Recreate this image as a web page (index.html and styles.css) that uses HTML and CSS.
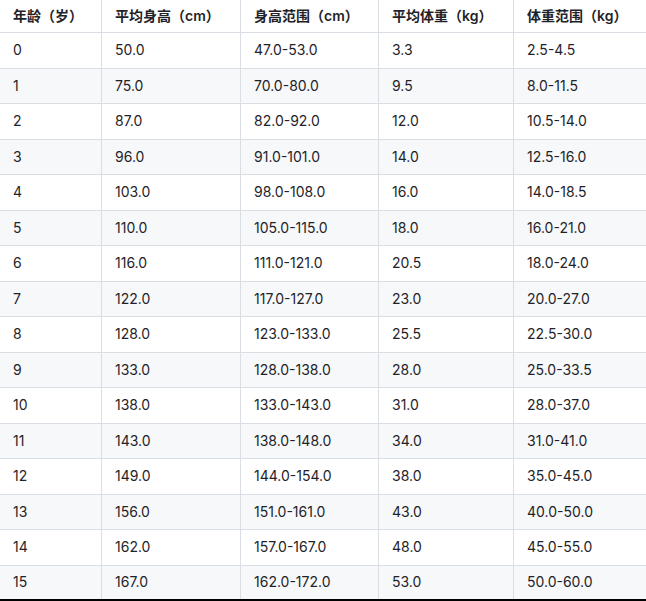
FILE: index.html
```html
<!DOCTYPE html>
<html lang="zh">
<head>
<meta charset="utf-8">
<link rel="stylesheet" href="styles.css">
</head>
<body>
<table class="growth">
<colgroup>
<col class="c1"><col class="c2"><col class="c3"><col class="c4"><col class="c5">
</colgroup>
<thead>
<tr><th>年龄（岁）</th><th>平均身高（cm）</th><th>身高范围（cm）</th><th>平均体重（kg）</th><th>体重范围（kg）</th></tr>
</thead>
<tbody>
<tr><td>0</td><td>50.0</td><td>47.0-53.0</td><td>3.3</td><td>2.5-4.5</td></tr>
<tr><td>1</td><td>75.0</td><td>70.0-80.0</td><td>9.5</td><td>8.0-11.5</td></tr>
<tr><td>2</td><td>87.0</td><td>82.0-92.0</td><td>12.0</td><td>10.5-14.0</td></tr>
<tr><td>3</td><td>96.0</td><td>91.0-101.0</td><td>14.0</td><td>12.5-16.0</td></tr>
<tr><td>4</td><td>103.0</td><td>98.0-108.0</td><td>16.0</td><td>14.0-18.5</td></tr>
<tr><td>5</td><td>110.0</td><td>105.0-115.0</td><td>18.0</td><td>16.0-21.0</td></tr>
<tr><td>6</td><td>116.0</td><td>111.0-121.0</td><td>20.5</td><td>18.0-24.0</td></tr>
<tr><td>7</td><td>122.0</td><td>117.0-127.0</td><td>23.0</td><td>20.0-27.0</td></tr>
<tr><td>8</td><td>128.0</td><td>123.0-133.0</td><td>25.5</td><td>22.5-30.0</td></tr>
<tr><td>9</td><td>133.0</td><td>128.0-138.0</td><td>28.0</td><td>25.0-33.5</td></tr>
<tr><td>10</td><td>138.0</td><td>133.0-143.0</td><td>31.0</td><td>28.0-37.0</td></tr>
<tr><td>11</td><td>143.0</td><td>138.0-148.0</td><td>34.0</td><td>31.0-41.0</td></tr>
<tr><td>12</td><td>149.0</td><td>144.0-154.0</td><td>38.0</td><td>35.0-45.0</td></tr>
<tr><td>13</td><td>156.0</td><td>151.0-161.0</td><td>43.0</td><td>40.0-50.0</td></tr>
<tr><td>14</td><td>162.0</td><td>157.0-167.0</td><td>48.0</td><td>45.0-55.0</td></tr>
<tr class="last"><td>15</td><td>167.0</td><td>162.0-172.0</td><td>53.0</td><td>50.0-60.0</td></tr>
</tbody>
</table>
<div class="edge"></div>
</body>
</html>
```
FILE: styles.css
```css
html, body {
  margin: 0;
  padding: 0;
  background: #ffffff;
}
body {
  font-family: Inter, "Noto Sans CJK SC", sans-serif;
  font-size: 14px;
  color: #1f2328;
  width: 646px;
  overflow: hidden;
}
.growth {
  border-collapse: separate;
  border-spacing: 0;
  table-layout: fixed;
  width: 646px;
}
.c1 { width: 102px; }
.c2 { width: 139px; }
.c3 { width: 138px; }
.c4 { width: 135px; }
.c5 { width: 132px; }
.growth th,
.growth td {
  box-sizing: border-box;
  padding: 0 13px;
  text-align: left;
  white-space: nowrap;
  border-right: 1px solid #d8dee4;
  border-bottom: 1px solid #d8dee4;
  line-height: 20px;
}
.growth th:last-child,
.growth td:last-child {
  border-right: none;
}
.growth th {
  font-weight: 600;
  height: 33px;
}
.growth tbody tr {
  height: 35.5px;
}
.growth tbody tr:nth-child(even) {
  background: #f6f8fa;
}
.growth tbody tr.last {
  height: 33px;
}
.growth tbody tr.last td {
  border-bottom: none;
}
.edge {
  height: 4px;
  background: #000000;
}
```
